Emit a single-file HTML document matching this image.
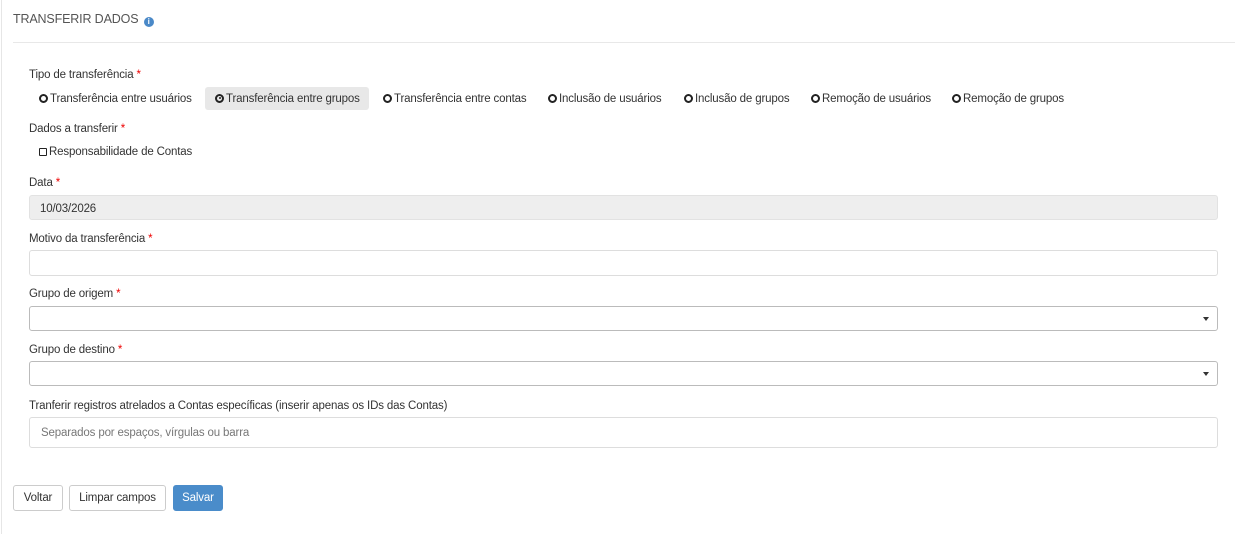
<!DOCTYPE html>
<html><head><meta charset="utf-8"><style>
*{box-sizing:border-box;margin:0;padding:0}
body{width:1235px;height:534px;background:#fff;font-family:"Liberation Sans",sans-serif;font-size:11.5px;letter-spacing:-0.15px;color:#333;position:relative;overflow:hidden}
.a{position:absolute;white-space:nowrap}
.lb{position:absolute;left:29px}
.req{color:#e00}
.in{position:absolute;left:29px;width:1189px;border:1px solid #ddd;border-radius:3px;background:#fff}
.rad{position:absolute;top:92px;line-height:14px;white-space:nowrap}
.rad i{display:inline-block;width:9px;height:9px;border:2px solid #222;border-radius:50%;margin-right:2px;vertical-align:-0.5px;position:relative}
.rad i.on:after{content:"";position:absolute;left:1.5px;top:1.5px;width:2px;height:2px;background:#222;border-radius:50%}
.car{position:absolute;right:8px;top:10px;width:0;height:0;border-left:3.5px solid transparent;border-right:3.5px solid transparent;border-top:4px solid #333}
.btn{position:absolute;top:485px;height:26px;border:1px solid #ccc;border-radius:3px;text-align:center;line-height:25px;background:#fff}
</style></head><body>
<div class="a" style="left:1px;top:0;width:1px;height:534px;background:#e6e6e6"></div>
<div class="a" style="left:13px;top:12px;font-size:12.5px;color:#555">TRANSFERIR DADOS <span style="display:inline-block;width:10px;height:10px;border-radius:50%;background:#4a89c8;color:#fff;font-size:8px;line-height:10px;text-align:center;font-weight:bold;vertical-align:-1px;margin-left:2px">i</span></div>
<div class="a" style="left:13px;top:42px;width:1222px;height:1px;background:#e8e8e8"></div>

<div class="lb" style="top:69px">Tipo de transferência <span class="req">*</span></div>
<div class="a" style="left:205px;top:87px;width:164px;height:23px;background:#e8e8e8;border-radius:3px"></div>
<div class="rad" style="left:39px"><i></i>Transferência entre usuários</div>
<div class="rad" style="left:215px"><i class="on"></i>Transferência entre grupos</div>
<div class="rad" style="left:383px"><i></i>Transferência entre contas</div>
<div class="rad" style="left:548px"><i></i>Inclusão de usuários</div>
<div class="rad" style="left:684px"><i></i>Inclusão de grupos</div>
<div class="rad" style="left:811px"><i></i>Remoção de usuários</div>
<div class="rad" style="left:952px"><i></i>Remoção de grupos</div>

<div class="lb" style="top:123px">Dados a transferir <span class="req">*</span></div>
<div class="a" style="left:39px;top:146px"><span style="display:inline-block;width:8px;height:8px;border:1px solid #222;border-radius:1px;margin-right:2px;vertical-align:-0.5px"></span>Responsabilidade de Contas</div>

<div class="lb" style="top:177px">Data <span class="req">*</span></div>
<div class="in" style="top:195px;height:25px;background:#eee;border-color:#e2e2e2;padding:7px 10px;line-height:12px">10/03/2026</div>

<div class="lb" style="top:233px">Motivo da transferência <span class="req">*</span></div>
<div class="in" style="top:250px;height:26px"></div>

<div class="lb" style="top:288px">Grupo de origem <span class="req">*</span></div>
<div class="in" style="top:306px;height:25px;border-color:#bbb"><div class="car"></div></div>

<div class="lb" style="top:344px">Grupo de destino <span class="req">*</span></div>
<div class="in" style="top:361px;height:25px;border-color:#bbb"><div class="car"></div></div>

<div class="lb" style="top:400px">Tranferir registros atrelados a Contas específicas (inserir apenas os IDs das Contas)</div>
<div class="in" style="top:417px;height:31px;padding:8px 11px;color:#777;line-height:14px">Separados por espaços, vírgulas ou barra</div>

<div class="btn" style="left:13px;width:50px">Voltar</div>
<div class="btn" style="left:69px;width:97px">Limpar campos</div>
<div class="btn" style="left:173px;width:50px;background:#4a8cca;border-color:#4a8cca;color:#fff">Salvar</div>
</body></html>
